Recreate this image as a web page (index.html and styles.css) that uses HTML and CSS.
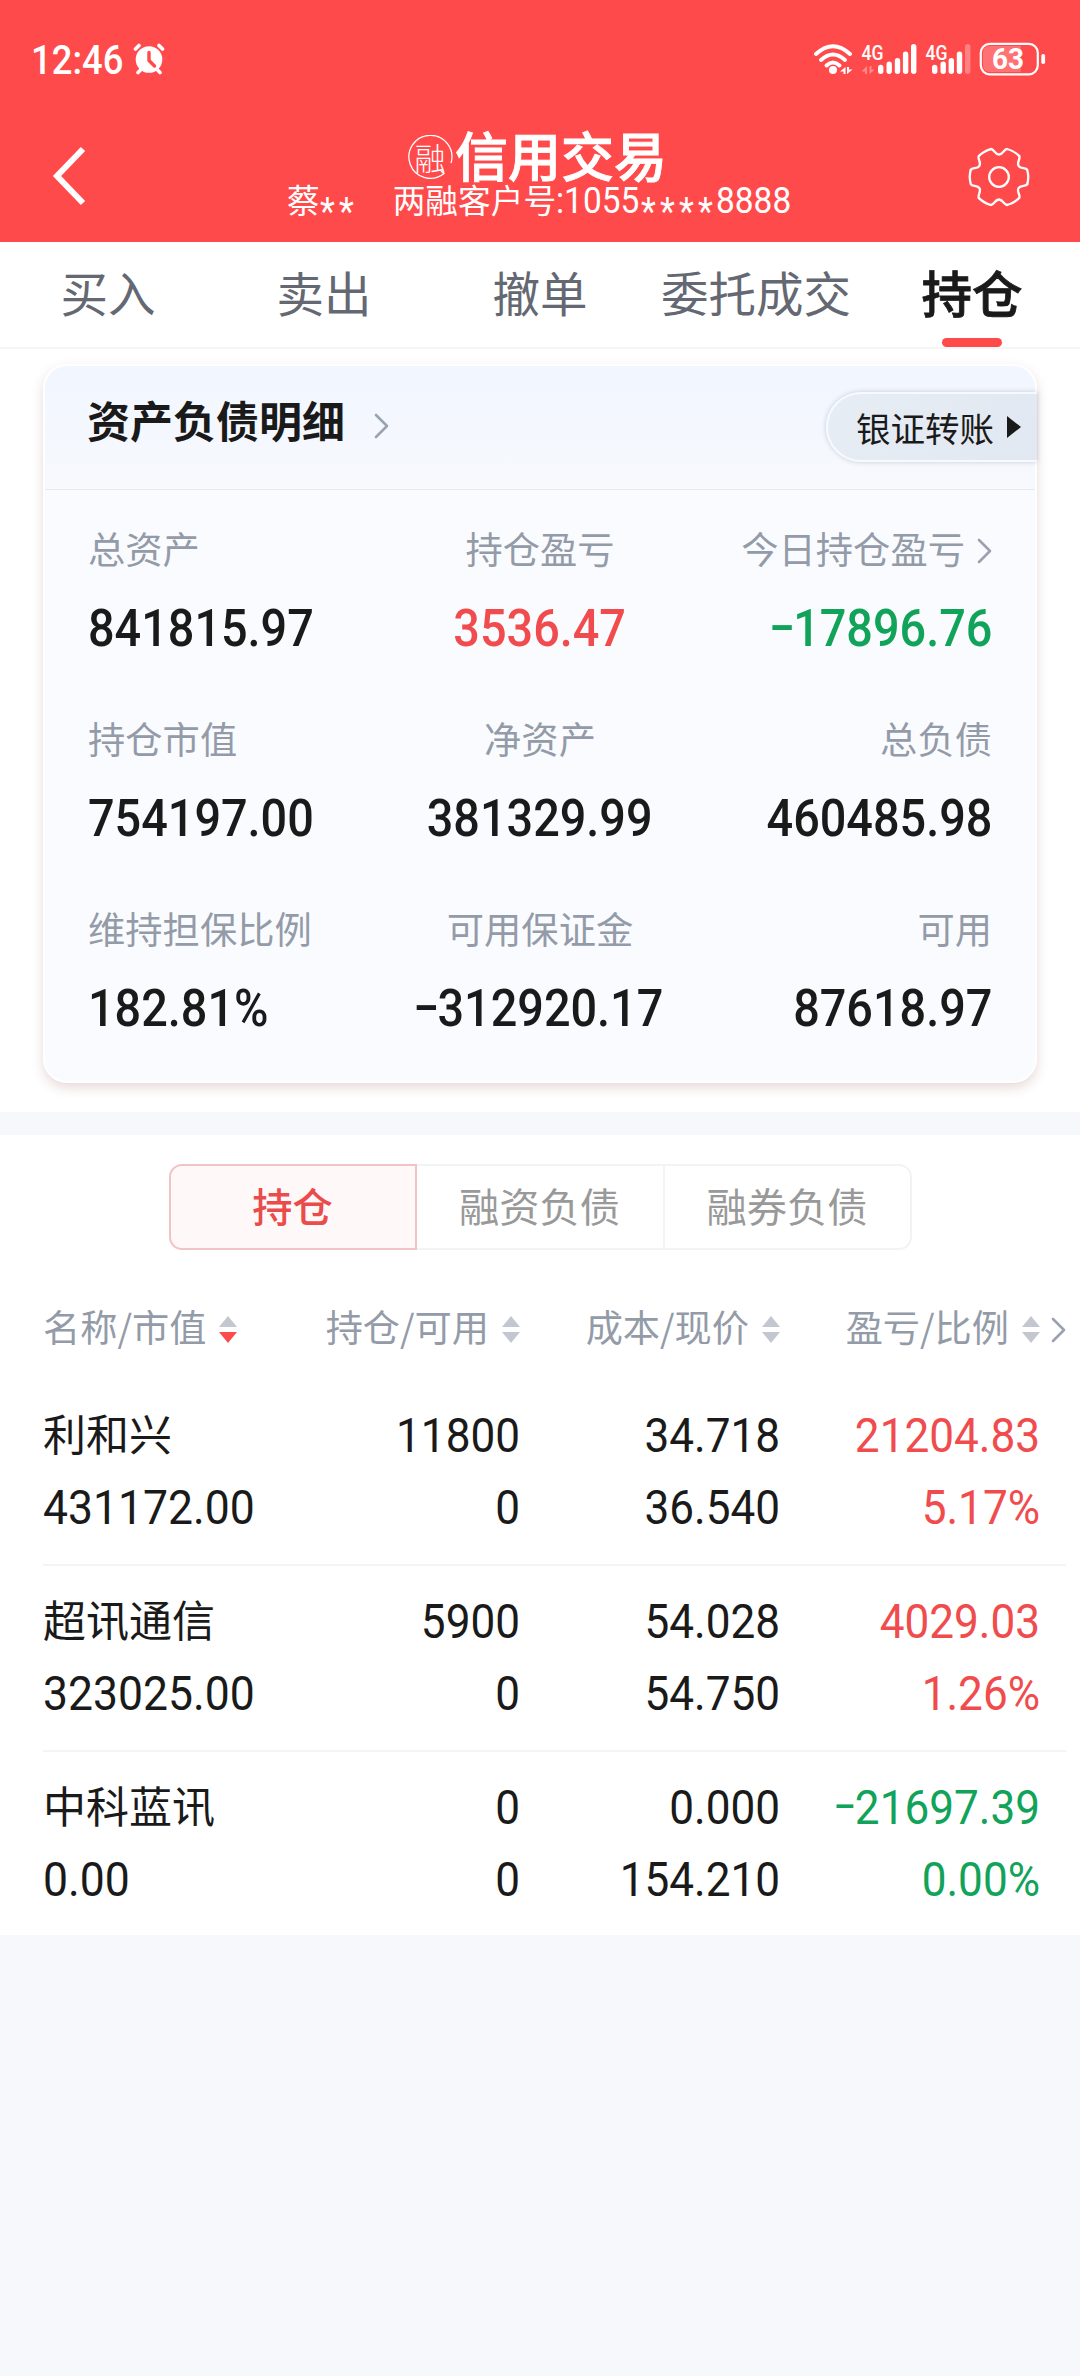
FILE: index.html
```html
<!DOCTYPE html>
<html lang="zh-CN">
<head>
<meta charset="utf-8">
<title>信用交易</title>
<link rel="stylesheet" href="styles.css">
</head>
<body>
<header class="top">
  <div class="status">
    <div class="status-left">
      <span class="clock">12:46</span>
      <svg class="alarm" width="32" height="32" viewBox="0 0 32 32">
        <g stroke="#fff" stroke-width="3.600" stroke-linecap="round" fill="none">
          <path d="M2.500 6L6 2.500M29.500 6L26 2.500M5 29.500L8 26.500M27 29.500L24 26.500"/>
        </g>
        <circle cx="16" cy="16.500" r="13.300" fill="#fff"/>
        <path d="M16 9.500V17.500L21.500 23" stroke="#ff4a4b" stroke-width="3.400" stroke-linecap="round" fill="none"/>
      </svg>
    </div>
    <svg class="signals" width="234" height="36" viewBox="813 41 234 36">
      <g stroke="#fff" stroke-width="4" stroke-linecap="round" fill="none">
        <path d="M816 54Q833 38.500 850 54"/>
        <path d="M821 60Q833 49 845 60"/>
        <path d="M826.500 65.500Q833 59.500 839.500 65.500"/>
      </g>
      <circle cx="833" cy="70" r="4" fill="#fff"/>
      <path d="M840 71.500L845.500 67V74H843.500V71.500ZM852.500 69.500L847 74V67H849V69.500Z" fill="#fff"/>
      <text class="net" x="861.500" y="59.500" textLength="22" lengthAdjust="spacingAndGlyphs">4G</text>
      <path d="M861.500 71.500L867 66V74H865V71.500ZM875 69.500L869.500 74V66H871.500V69.500Z" fill="#fff" opacity=".35"/>
      <g stroke="#fff" stroke-width="5.400" stroke-linecap="round">
        <path d="M880.700 67.500V71.300M889.200 64.200V71.300M897.500 60.700V71.300M905.600 54.200V71.300M913.700 46.700V71.300"/>
        <path d="M934.700 67.500V71.300M943.200 64.200V71.300M951.300 60.700V71.300M959.500 54.200V71.300"/>
        <path d="M967.700 46.700V71.300" opacity=".3"/>
      </g>
      <text class="net" x="925.500" y="59.500" textLength="22" lengthAdjust="spacingAndGlyphs">4G</text>
      <path d="M990 46H1020.700V72H990Q983 72 983 65V53Q983 46 990 46Z" fill="#fff" opacity=".22"/>
      <rect x="980.800" y="43.800" width="57" height="30.500" rx="9" fill="none" stroke="#fff" stroke-width="2.200"/>
      <rect x="1041.300" y="54" width="3.800" height="10" rx="1.800" fill="#fff"/>
      <text class="battery" x="992" y="69.300" textLength="32" lengthAdjust="spacingAndGlyphs">63</text>
    </svg>
  </div>
  <div class="nav">
    <svg class="back" width="40" height="64" viewBox="0 0 40 64"><path d="M34 5L8 32L34 59" fill="none" stroke="#fff" stroke-width="6"/></svg>
    <div class="heading">
      <div class="title-row">
        <svg width="46" height="46" viewBox="0 0 46 46">
          <path d="M44 28A21.500 21.500 0 1 0 37 38.500L34 36" fill="none" stroke="#fff" stroke-width="1.300"/>
          <text class="badge-char" x="23" y="34.500" text-anchor="middle">融</text>
        </svg>
        <h1>信用交易</h1>
      </div>
      <div class="account">
        <span>蔡</span><span class="stars">**</span><span class="client">两融客户号</span><span class="acct-num">:1055</span><span class="stars">****</span><span class="acct-num">8888</span>
      </div>
    </div>
    <svg class="gear" width="64" height="64" viewBox="-32 -32 64 64">
      <defs><path id="tooth" d="M-8-28C-5-28-4-22.500 0-22.500S5-28 8-28Q15.500-26 20.250-20.900"/></defs>
      <g fill="none" stroke="#fff" stroke-width="2.300" stroke-linecap="round">
        <use href="#tooth"/><use href="#tooth" transform="rotate(60)"/><use href="#tooth" transform="rotate(120)"/>
        <use href="#tooth" transform="rotate(180)"/><use href="#tooth" transform="rotate(240)"/><use href="#tooth" transform="rotate(300)"/>
        <circle r="9.800"/>
      </g>
    </svg>
  </div>
</header>

<nav class="tabs">
  <div class="tab">买入</div>
  <div class="tab">卖出</div>
  <div class="tab">撤单</div>
  <div class="tab">委托成交</div>
  <div class="tab active">持仓</div>
</nav>

<main>
  <section class="summary">
    <div class="card">
      <div class="card-head">
        <h2>资产负债明细</h2>
        <svg class="chev" width="15" height="26" viewBox="0 0 15 26"><path d="M2 2L13 13L2 24" /></svg>
        <div class="transfer">银证转账<i class="play"></i></div>
      </div>
      <div class="metrics">
        <div class="metric"><div class="label">总资产</div><div class="value">841815.97</div></div>
        <div class="metric"><div class="label">持仓盈亏</div><div class="value up">3536.47</div></div>
        <div class="metric"><div class="label">今日持仓盈亏<svg class="chev" width="15" height="26" viewBox="0 0 15 26"><path d="M2 2L13 13L2 24"/></svg></div><div class="value down"><span class="minus">-</span>17896.76</div></div>
        <div class="metric"><div class="label">持仓市值</div><div class="value">754197.00</div></div>
        <div class="metric"><div class="label">净资产</div><div class="value">381329.99</div></div>
        <div class="metric"><div class="label">总负债</div><div class="value">460485.98</div></div>
        <div class="metric"><div class="label">维持担保比例</div><div class="value">182.81%</div></div>
        <div class="metric"><div class="label">可用保证金</div><div class="value"><span class="minus">-</span>312920.17</div></div>
        <div class="metric"><div class="label">可用</div><div class="value">87618.97</div></div>
      </div>
    </div>
  </section>

  <section class="holdings">
    <div class="segments">
      <div class="segment on">持仓</div>
      <div class="segment">融资负债</div>
      <div class="segment">融券负债</div>
    </div>
    <div class="cols">
      <div class="col">名称/市值<i class="sort desc"></i></div>
      <div class="col">持仓/可用<i class="sort"></i></div>
      <div class="col">成本/现价<i class="sort"></i></div>
      <div class="col">盈亏/比例<i class="sort"></i></div>
      <svg class="chev more" width="15" height="26" viewBox="0 0 15 26"><path d="M2 2L13 13L2 24"/></svg>
    </div>
    <div class="row">
      <div class="name">利和兴</div><div class="num">11800</div><div class="num">34.718</div><div class="num up">21204.83</div>
      <div class="num">431172.00</div><div class="num">0</div><div class="num">36.540</div><div class="num up">5.17%</div>
    </div>
    <div class="row">
      <div class="name">超讯通信</div><div class="num">5900</div><div class="num">54.028</div><div class="num up">4029.03</div>
      <div class="num">323025.00</div><div class="num">0</div><div class="num">54.750</div><div class="num up">1.26%</div>
    </div>
    <div class="row">
      <div class="name">中科蓝讯</div><div class="num">0</div><div class="num">0.000</div><div class="num down"><span class="minus">-</span>21697.39</div>
      <div class="num">0.00</div><div class="num">0</div><div class="num">154.210</div><div class="num down">0.00%</div>
    </div>
  </section>
</main>
</body>
</html>
```
FILE: styles.css
```css
* { box-sizing: border-box; }
body {
  margin: 0;
  width: 1080px;
  min-height: 2376px;
  background: #f6f8fb;
  color: #1a1a1a;
  font-family: "Noto Sans CJK SC", sans-serif;
}
h1, h2 { margin: 0; }
svg { display: block; flex: none; }

/* red header */
.top { height: 242px; background: #ff4a4b; color: #fff; }
.status {
  height: 120px;
  display: flex;
  justify-content: space-between;
  padding: 41px 33px 0 31px;
}
.status-left { display: flex; }
.clock {
  width: 102px;
  font: 500 40px/39px Roboto, sans-serif;
  transform: scaleX(.91);
  transform-origin: left;
}
.alarm { margin-top: 2px; }
.net { font: 500 20px Roboto, sans-serif; fill: #fff; }
.battery { font: 700 30px Roboto, sans-serif; fill: #fff; }
.nav {
  height: 122px;
  display: flex;
  padding: 0 49px;
}
.back { margin-top: 24px; }
.gear { margin: 25px 0 0 auto; }
.heading { width: 530px; margin-left: 194px; padding-top: 6px; }
.title-row { display: flex; align-items: center; height: 56px; padding-left: 124px; }
.title-row svg { margin-top: 8px; }
.title-row h1 { font-size: 53px; line-height: 56px; font-weight: 500; margin-left: 2px; -webkit-text-stroke: .9px #fff; }
.badge-char { font-size: 31px; font-weight: 300; fill: #fff; }
.account {
  display: flex;
  height: 34px;
  padding-left: 4px;
  font-size: 32.700px;
  line-height: 34px;
  white-space: nowrap;
}
.client { margin-left: 35px; }
.acct-num, .stars {
  font: 400 37.800px/37px Roboto, sans-serif;
  transform: scaleX(.885);
  transform-origin: left;
}
.client + .acct-num { width: 85px; }
.stars { width: 38px; padding-top: 12px; font-size: 39px; letter-spacing: 4.700px; }
.acct-num + .stars { width: 75px; }

/* tab bar */
.tabs {
  height: 107px;
  display: grid;
  grid-template-columns: repeat(5, 216px);
  background: #fff;
  border-bottom: 2px solid #f6f6f7;
}
.tab {
  display: flex;
  flex-direction: column;
  align-items: center;
  font-size: 47.500px;
  line-height: 99px;
  height: 105px;
  color: #646872;
}
.tab.active { font-size: 50.500px; font-weight: 500; color: #1a1a1a; -webkit-text-stroke: .8px #1a1a1a; }
.tab.active::after {
  content: "";
  width: 60px;
  height: 9px;
  margin-top: -3px;
  border-radius: 5px;
  background: #ff4a4b;
  flex: none;
}

/* asset card */
.summary { height: 763px; padding: 15px 43px 0 43px; background: #fff; }
.card {
  height: 719px;
  border-radius: 24px;
  border: 2px solid #fff;
  background: #fafbff;
  box-shadow: 0 5px 12px rgba(110, 40, 30, .17);
}
.card-head {
  height: 124px;
  display: flex;
  border-bottom: 1px solid #e4eaf1;
  border-radius: 22px 22px 0 0;
  background: linear-gradient(#f1f6ff, #f7f9fd);
  padding-left: 42px;
}
.card-head h2 { font-size: 43px; line-height: 106px; font-weight: 700; width: 287px; }
.chev path { fill: none; stroke: #9ba2af; stroke-width: 2.600; stroke-linecap: round; stroke-linejoin: round; }
.card-head .chev { margin-top: 47px; }
.transfer {
  margin: 26px -2px 0 auto;
  width: 211px;
  height: 70px;
  display: flex;
  align-items: center;
  padding-left: 28px;
  font-size: 34.500px;
  line-height: 64px;
  border: 2px solid #f6f9fd;
  border-right: 0;
  border-radius: 35px 0 0 35px;
  background: linear-gradient(120deg, #e6edf5, #e1e8f1);
  box-shadow: 0 0 5px rgba(60, 70, 90, .25);
  white-space: nowrap;
}
.play {
  margin-left: 13px;
  border-left: 14px solid #1a1a1a;
  border-top: 11px solid transparent;
  border-bottom: 11px solid transparent;
}
.metrics {
  display: grid;
  grid-template-columns: repeat(3, 1fr);
  grid-auto-rows: 190px;
  padding: 33px 43px 0;
}
.label {
  height: 50px;
  font-size: 37.300px;
  line-height: 50px;
  color: #949ba8;
  display: flex;
  align-items: center;
  white-space: nowrap;
}
.label .chev { margin: 6px 0 0 12px; }
.value {
  margin-top: 26px;
  font: 500 52px/60px Roboto, sans-serif;
  transform: scaleX(.9);
  transform-origin: left;
}
.metric:nth-child(3n+2) .label { justify-content: center; }
.metric:nth-child(3n+2) .value { text-align: center; transform-origin: center; }
.metric:nth-child(3n) .label { justify-content: flex-end; }
.metric:nth-child(3n) .value { text-align: right; transform-origin: right; }
.minus {
  display: inline-block;
  width: .46em;
  line-height: 1;
  text-align: center;
  vertical-align: 3px;
  transform: scaleX(1.6);
}
.up { color: #f04c4e; }
.down { color: #12a35a; }

/* holdings */
.holdings { margin-top: 23px; height: 800px; padding-top: 29px; background: #fff; }
.segments {
  width: 743px;
  height: 86px;
  margin: 0 auto;
  display: grid;
  grid-template-columns: 248px 248px 247px;
}
.segment {
  text-align: center;
  font-size: 40.300px;
  line-height: 78px;
  color: #999;
  border: 2px solid #f2f3f6;
  border-left: 0;
}
.segment.on { border: 2px solid #f2c3c4; border-radius: 13px 0 0 13px; background: #fff8f8; color: #e94c4a; font-weight: 500; }
.segment:last-child { border-radius: 0 13px 13px 0; }
.cols, .row {
  display: grid;
  grid-template-columns: 237px 240px 260px 260px;
  margin: 0 14px 0 43px;
}
.cols {
  grid-template-columns: 237px 240px 260px 260px 26px;
  height: 130px;
  padding-top: 49px;
}
.col {
  display: flex;
  justify-content: flex-end;
  height: 56px;
  line-height: 54px;
  font-size: 37.200px;
  color: #949ba8;
  white-space: nowrap;
}
.col:first-child { justify-content: flex-start; }
.sort { margin: 17px 0 0 13px; height: 27px; display: flex; flex-direction: column; justify-content: space-between; }
.sort::before, .sort::after { content: ""; border: 9px solid transparent; }
.sort::before { border-top: 0; border-bottom: 11px solid #c3c7cf; }
.sort::after { border-bottom: 0; border-top: 11px solid #c3c7cf; }
.sort.desc::after { border-top-color: #ff4a4b; }
.more { margin: 18px 0 0 11px; }
.row { height: 186px; padding-top: 19px; grid-auto-rows: 72px; border-bottom: 2px solid #f3f4f6; }
.row:last-child { border: 0; }
.name { font-size: 43px; line-height: 67px; }
.num {
  font: 400 49px/74px Roboto, sans-serif;
  transform: scaleX(.9);
  transform-origin: right;
  text-align: right;
}
.num:nth-child(5) { text-align: left; transform: scaleX(.908); transform-origin: left; }
```
